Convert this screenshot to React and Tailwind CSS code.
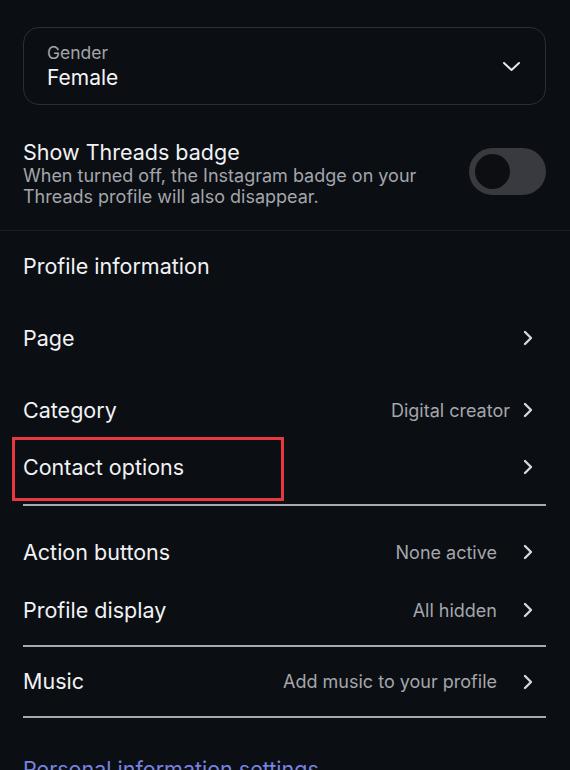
const ChevronRight = () => (
  <svg width="10" height="16" viewBox="0 0 10 16" fill="none" className="shrink-0">
    <path d="M2 2l6 6-6 6" stroke="#d6d7da" strokeWidth="2.4" strokeLinecap="round" strokeLinejoin="round" />
  </svg>
);

const ChevronDown = () => (
  <svg width="19" height="11" viewBox="0 0 19 11" fill="none">
    <path d="M2 2l7.5 7 7.5-7" stroke="#e6e7ea" strokeWidth="2" strokeLinecap="round" strokeLinejoin="round" />
  </svg>
);

const Row = ({ label, value, gap = 'gap-[26px]', className = '' }) => (
  <div className={`flex items-center justify-between ${className}`}>
    <span className="text-[21.5px] text-[#f1f2f4]">{label}</span>
    <div className={`flex items-center ${gap} pr-[13px]`}>
      {value && <span className="text-[18px] text-[#a4a6ab]">{value}</span>}
      <ChevronRight />
    </div>
  </div>
);

export default function App() {
  return (
    <div
      className="w-[570px] h-[770px] overflow-hidden bg-[#0b0e13]"
      style={{ fontFamily: 'Inter, "Noto Sans", sans-serif' }}
    >
      <div className="px-[23px] pr-[24px] pt-[27px]">
        {/* Gender select */}
        <div className="h-[78px] rounded-[16px] border border-[#2b2e34] pl-[23px] pr-[24px] flex items-center justify-between">
          <div className="flex flex-col">
            <span className="text-[17.5px] leading-[23px] text-[#a2a5aa]">Gender</span>
            <span className="text-[21px] leading-[28px] text-[#f3f4f6]">Female</span>
          </div>
          <ChevronDown />
        </div>

        {/* Threads badge */}
        <div className="flex items-center justify-between mt-[33px] h-[70px]">
          <div className="flex flex-col">
            <span className="text-[21.5px] leading-[26px] text-[#f1f2f4]">Show Threads badge</span>
            <span className="text-[18px] leading-[21px] text-[#a4a6ab]">
              When turned off, the Instagram badge on your
              <br />
              Threads profile will also disappear.
            </span>
          </div>
          <div className="w-[77px] h-[47px] rounded-full bg-[#393a3f] flex items-center pl-[6px] -mt-[3px]">
            <div className="w-[35px] h-[35px] rounded-full bg-[#0c0e12]" />
          </div>
        </div>
      </div>

      <div className="mt-[22px] h-px bg-[#1b1e23]" />

      <div className="px-[23px] pr-[24px]">
        <div className="h-[71px] flex items-center">
          <span className="text-[21.5px] text-[#f1f2f4]">Profile information</span>
        </div>
        <Row label="Page" className="h-[72px]" />
        <Row label="Category" value="Digital creator" gap="gap-[13px]" className="h-[72px]" />
        <div className="relative">
          <Row label="Contact options" className="h-[42px]" />
          <div className="absolute -left-[11px] -top-[9px] w-[272px] h-[64px] border-[3px] border-[#e8383d]" />
        </div>
        <div className="mt-[16px] h-[2px] bg-[#a9aaad]" />
        <Row label="Action buttons" value="None active" className="h-[58px] mt-[17px]" />
        <Row label="Profile display" value="All hidden" className="h-[58px]" />
        <div className="mt-[6px] h-[2px] bg-[#a9aaad]" />
        <Row label="Music" value="Add music to your profile" className="h-[69px]" />
        <div className="h-[2px] bg-[#a9aaad]" />
        <div className="mt-[35px] text-[21.5px] text-[#7683e0]">Personal information settings</div>
      </div>
    </div>
  );
}
